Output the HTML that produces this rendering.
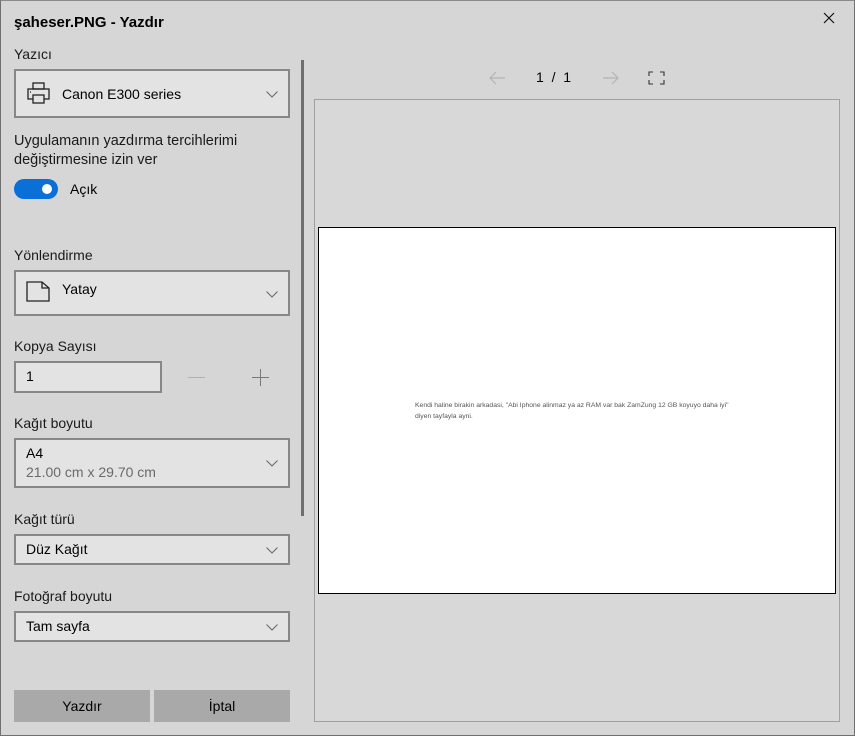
<!DOCTYPE html>
<html><head><meta charset="utf-8"><style>
*{margin:0;padding:0;box-sizing:border-box}
body{width:855px;height:736px;background:#d6d6d6;font-family:"Segoe UI","Liberation Sans","DejaVu Sans",sans-serif;color:#000;position:relative;overflow:hidden}
.win{position:absolute;left:0;top:0;width:855px;height:736px;border:1px solid #6f6f6f;border-top-color:#8a8a8a}
.a{position:absolute}
.lbl{position:absolute;left:14px;font-size:14px;color:#1a1a1a}
.dd{position:absolute;left:14px;width:276px;background:#e3e3e3;border:2px solid #878787}
.chev{position:absolute;right:10px;width:12px;height:7px}
.txt{position:absolute;font-size:14px}
.btn{position:absolute;top:690px;height:32px;width:136px;background:#a9a9a9;font-size:14px;text-align:center;line-height:32px}
</style></head><body>
<div class="win"></div>
<div class="a" style="left:14px;top:14px;font-size:15px;font-weight:bold">şaheser.PNG - Yazdır</div>
<svg class="a" style="left:822px;top:11px" width="14" height="14"><path d="M2 2L12 12M12 2L2 12" stroke="#111" stroke-width="1.2"/></svg>

<div class="lbl" style="top:46px">Yazıcı</div>
<div class="dd" style="top:69px;height:49px">
 <svg class="a" style="left:10px;top:10px" width="26" height="26" fill="none" stroke="#222" stroke-width="1.3"><rect x="7" y="2" width="11" height="6"/><rect x="2" y="8" width="21" height="10"/><rect x="7" y="14" width="11" height="8" fill="#e3e3e3"/><path d="M4 11h1"/></svg>
 <div class="txt" style="left:46px;top:15px">Canon E300 series</div>
 <svg class="chev" style="top:20px" viewBox="0 0 12 7"><path d="M0.5 0.5L6 6L11.5 0.5" fill="none" stroke="#666"/></svg>
</div>
<div class="lbl" style="top:132px;line-height:19px;font-size:14.5px">Uygulamanın yazdırma tercihlerimi<br>değiştirmesine izin ver</div>
<div class="a" style="left:14px;top:179px;width:44px;height:20px;border-radius:10px;background:#0a6fd6"></div>
<div class="a" style="left:42px;top:184px;width:10px;height:10px;border-radius:5px;background:#fff"></div>
<div class="txt" style="left:70px;top:181px">Açık</div>

<div class="lbl" style="top:247px">Yönlendirme</div>
<div class="dd" style="top:270px;height:46px">
 <svg class="a" style="left:10px;top:9px" width="26" height="22" fill="none" stroke="#222" stroke-width="1.3"><path d="M1 1H16L23 7V20H1Z M16 1V7H23"/></svg>
 <div class="txt" style="left:46px;top:9px">Yatay</div>
 <svg class="chev" style="top:19px" viewBox="0 0 12 7"><path d="M0.5 0.5L6 6L11.5 0.5" fill="none" stroke="#666"/></svg>
</div>

<div class="lbl" style="top:338px">Kopya Sayısı</div>
<div class="a" style="left:14px;top:361px;width:148px;height:32px;background:#e3e3e3;border:2px solid #878787"></div>
<div class="txt" style="left:26px;top:368px">1</div>
<div class="a" style="left:188px;top:377px;width:17px;height:1px;background:#b0b0b0"></div>
<div class="a" style="left:252px;top:377px;width:17px;height:1px;background:#777"></div>
<div class="a" style="left:260px;top:369px;width:1px;height:17px;background:#777"></div>

<div class="lbl" style="top:415px">Kağıt boyutu</div>
<div class="dd" style="top:438px;height:50px">
 <div class="txt" style="left:10px;top:5px">A4</div>
 <div class="txt" style="left:10px;top:24px;color:#6a6a6a">21.00 cm x 29.70 cm</div>
 <svg class="chev" style="top:20px" viewBox="0 0 12 7"><path d="M0.5 0.5L6 6L11.5 0.5" fill="none" stroke="#666"/></svg>
</div>

<div class="lbl" style="top:511px">Kağıt türü</div>
<div class="dd" style="top:534px;height:31px">
 <div class="txt" style="left:10px;top:5px">Düz Kağıt</div>
 <svg class="chev" style="top:11px" viewBox="0 0 12 7"><path d="M0.5 0.5L6 6L11.5 0.5" fill="none" stroke="#666"/></svg>
</div>

<div class="lbl" style="top:588px">Fotoğraf boyutu</div>
<div class="dd" style="top:611px;height:31px">
 <div class="txt" style="left:10px;top:5px">Tam sayfa</div>
 <svg class="chev" style="top:11px" viewBox="0 0 12 7"><path d="M0.5 0.5L6 6L11.5 0.5" fill="none" stroke="#666"/></svg>
</div>

<div class="btn" style="left:14px">Yazdır</div>
<div class="btn" style="left:154px">İptal</div>

<div class="a" style="left:301px;top:60px;width:3px;height:456px;background:#6e6e6e"></div>

<svg class="a" style="left:487px;top:70px" width="20" height="16"><path d="M18 8H3M9 2L3 8L9 14" fill="none" stroke="#b4b4b4" stroke-width="1.2"/></svg>
<div class="txt" style="left:536px;top:69px">1 &nbsp;/ &nbsp;1</div>
<svg class="a" style="left:601px;top:70px" width="20" height="16"><path d="M2 8H17M11 2L17 8L11 14" fill="none" stroke="#b4b4b4" stroke-width="1.2"/></svg>
<svg class="a" style="left:648px;top:71px" width="17" height="14" fill="none" stroke="#333" stroke-width="1.1"><path d="M1 5V1H5M12 1H16V5M16 9V13H12M5 13H1V9"/></svg>

<div class="a" style="left:314px;top:99px;width:526px;height:623px;border:1px solid #a0a0a0;background:#d8d8d8"></div>
<div class="a" style="left:318px;top:227px;width:518px;height:367px;background:#fff;border:1px solid #000"></div>
<div class="a" style="left:415px;top:400px;font-size:6.8px;color:#555;line-height:11px;white-space:nowrap;font-family:'Liberation Sans',sans-serif">Kendi haline birakin arkadasi, "Abi Iphone alinmaz ya az RAM var bak ZamZung 12 GB koyuyo daha iyi"<br>diyen tayfayla ayni.</div>
</body></html>
